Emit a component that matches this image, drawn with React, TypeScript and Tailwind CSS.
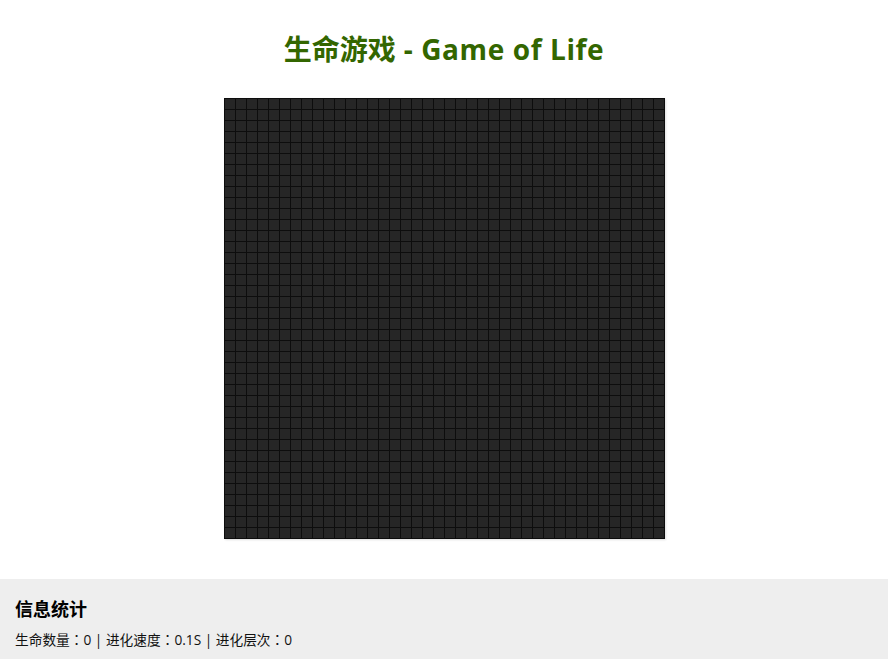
import React from "react";

const N = 40;

const Colon = () => (
  <span style={{ fontFamily: '"Noto Sans CJK TC", sans-serif' }}>：</span>
);

export default function App() {
  const cells = Array.from({ length: N * N });
  return (
    <div
      className="min-h-[666px] bg-white"
      style={{ fontFamily: '"Open Sans", "Noto Sans CJK SC", sans-serif' }}
    >
      <h1 className="pt-[30px] text-center text-[28px] font-bold leading-[39px] text-[#336600]">
        生命游戏<span className="tracking-[0.6px]"> - Game of Life</span>
      </h1>
      <div className="mt-[29px] flex justify-center">
        <div className="grid w-[441px] grid-cols-[repeat(40,10px)] gap-px border border-[#0d0d0d] bg-[#0d0d0d] shadow-[1px_1px_2px_rgba(0,0,0,0.12)]">
          {cells.map((_, i) => (
            <div key={i} className="h-[10px] w-[10px] bg-[#262626]" />
          ))}
        </div>
      </div>
      <div className="mt-[40px] h-[80px] bg-[#eeeeee] pl-[15px] pt-[18px]">
        <h2 className="text-[18px] font-bold leading-[24px] text-black">信息统计</h2>
        <p className="mt-[8px] text-[13.7px] leading-[20px] text-[#111]">
          生命数量<Colon />0 | 进化速度<Colon />0.1S | 进化层次<Colon />0
        </p>
      </div>
    </div>
  );
}
